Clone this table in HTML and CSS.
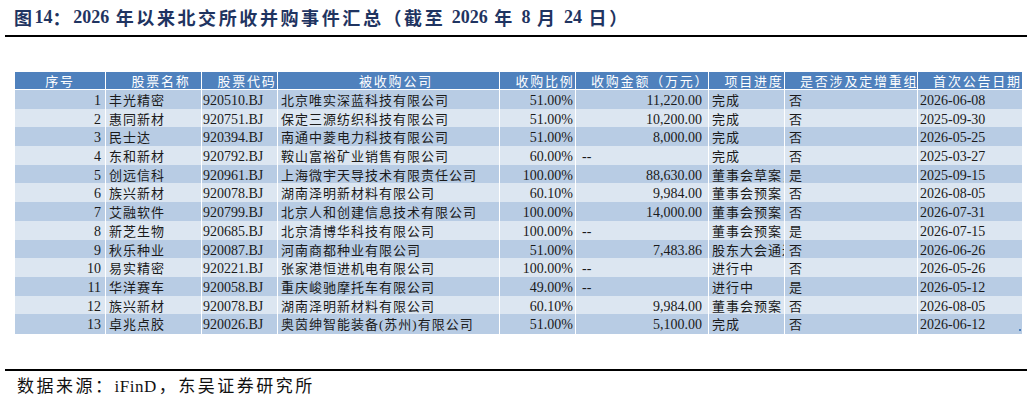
FILE: index.html
```html
<!DOCTYPE html>
<html lang="zh">
<head>
<meta charset="utf-8">
<title>图14</title>
<link rel="stylesheet" href="styles.css">
</head>
<body>
<div class="page">
  <div class="title">图<span class="lt">14</span>：<span class="lt">2026 </span>年以来北交所收并购事件汇总（截至<span class="lt"> 2026 </span>年<span class="lt"> 8 </span>月<span class="lt"> 24 </span>日）</div>
  <div class="rule"></div>

  <div class="table">
    <div class="tr head">
      <div class="th first">序号</div>
      <div class="th">股票名称</div>
      <div class="th">股票代码</div>
      <div class="th">被收购公司</div>
      <div class="th">收购比例</div>
      <div class="th">收购金额（万元）</div>
      <div class="th">项目进度</div>
      <div class="th">是否涉及定增重组</div>
      <div class="th">首次公告日期</div>
    </div>

    <div class="tr odd"><div class="td idx">1</div><div class="td cn name">丰光精密</div><div class="td code">920510.BJ</div><div class="td cn co">北京唯实深蓝科技有限公司</div><div class="td pct">51.00%</div><div class="td amt">11,220.00</div><div class="td cn prog">完成</div><div class="td cn yn">否</div><div class="td date">2026-06-08</div></div>
    <div class="tr even"><div class="td idx">2</div><div class="td cn name">惠同新材</div><div class="td code">920751.BJ</div><div class="td cn co">保定三源纺织科技有限公司</div><div class="td pct">51.00%</div><div class="td amt">10,200.00</div><div class="td cn prog">完成</div><div class="td cn yn">否</div><div class="td date">2025-09-30</div></div>
    <div class="tr odd"><div class="td idx">3</div><div class="td cn name">民士达</div><div class="td code">920394.BJ</div><div class="td cn co">南通中菱电力科技有限公司</div><div class="td pct">51.00%</div><div class="td amt">8,000.00</div><div class="td cn prog">完成</div><div class="td cn yn">否</div><div class="td date">2026-05-25</div></div>
    <div class="tr even"><div class="td idx">4</div><div class="td cn name">东和新材</div><div class="td code">920792.BJ</div><div class="td cn co">鞍山富裕矿业销售有限公司</div><div class="td pct">60.00%</div><div class="td amt dash">--</div><div class="td cn prog">完成</div><div class="td cn yn">否</div><div class="td date">2025-03-27</div></div>
    <div class="tr odd"><div class="td idx">5</div><div class="td cn name">创远信科</div><div class="td code">920961.BJ</div><div class="td cn co">上海微宇天导技术有限责任公司</div><div class="td pct">100.00%</div><div class="td amt">88,630.00</div><div class="td cn prog">董事会草案，</div><div class="td cn yn">是</div><div class="td date">2025-09-15</div></div>
    <div class="tr even"><div class="td idx">6</div><div class="td cn name">族兴新材</div><div class="td code">920078.BJ</div><div class="td cn co">湖南泽明新材料有限公司</div><div class="td pct">60.10%</div><div class="td amt">9,984.00</div><div class="td cn prog">董事会预案</div><div class="td cn yn">否</div><div class="td date">2026-08-05</div></div>
    <div class="tr odd"><div class="td idx">7</div><div class="td cn name">艾融软件</div><div class="td code">920799.BJ</div><div class="td cn co">北京人和创建信息技术有限公司</div><div class="td pct">100.00%</div><div class="td amt">14,000.00</div><div class="td cn prog">董事会预案</div><div class="td cn yn">否</div><div class="td date">2026-07-31</div></div>
    <div class="tr even"><div class="td idx">8</div><div class="td cn name">新芝生物</div><div class="td code">920685.BJ</div><div class="td cn co">北京清博华科技有限公司</div><div class="td pct">100.00%</div><div class="td amt dash">--</div><div class="td cn prog">董事会预案</div><div class="td cn yn">是</div><div class="td date">2026-07-15</div></div>
    <div class="tr odd"><div class="td idx">9</div><div class="td cn name">秋乐种业</div><div class="td code">920087.BJ</div><div class="td cn co">河南商都种业有限公司</div><div class="td pct">51.00%</div><div class="td amt">7,483.86</div><div class="td cn prog">股东大会通过</div><div class="td cn yn">否</div><div class="td date">2026-06-26</div></div>
    <div class="tr even"><div class="td idx">10</div><div class="td cn name">易实精密</div><div class="td code">920221.BJ</div><div class="td cn co">张家港恒进机电有限公司</div><div class="td pct">100.00%</div><div class="td amt dash">--</div><div class="td cn prog">进行中</div><div class="td cn yn">否</div><div class="td date">2026-05-26</div></div>
    <div class="tr odd"><div class="td idx">11</div><div class="td cn name">华洋赛车</div><div class="td code">920058.BJ</div><div class="td cn co">重庆峻驰摩托车有限公司</div><div class="td pct">49.00%</div><div class="td amt dash">--</div><div class="td cn prog">进行中</div><div class="td cn yn">是</div><div class="td date">2026-05-12</div></div>
    <div class="tr even"><div class="td idx">12</div><div class="td cn name">族兴新材</div><div class="td code">920078.BJ</div><div class="td cn co">湖南泽明新材料有限公司</div><div class="td pct">60.10%</div><div class="td amt">9,984.00</div><div class="td cn prog">董事会预案</div><div class="td cn yn">否</div><div class="td date">2026-08-05</div></div>
    <div class="tr odd"><div class="td idx">13</div><div class="td cn name">卓兆点胶</div><div class="td code">920026.BJ</div><div class="td cn co">奥茵绅智能装备(苏州)有限公司</div><div class="td pct">51.00%</div><div class="td amt">5,100.00</div><div class="td cn prog">完成</div><div class="td cn yn">否</div><div class="td date">2026-06-12</div></div>

    <div class="handle"></div>
  </div>

  <div class="rule foot-rule"></div>
  <div class="source">数据来源：<span class="latin">iFinD</span>，东吴证券研究所</div>
</div>
</body>
</html>
```

FILE: styles.css
```css
* { box-sizing: border-box; }

html, body {
  margin: 0;
  padding: 0;
  background: #ffffff;
}

.page {
  width: 1032px;
  height: 403px;
  overflow: hidden;
  font-family: "Liberation Serif", "Noto Sans CJK SC", serif;
  color: #1a1a1a;
}

.title {
  height: 34px;
  padding-left: 14px;
  display: flex;
  align-items: center;
  font-size: 18px;
  font-weight: bold;
  letter-spacing: 2.6px;
  color: #1f3461;
  white-space: pre;
}

.title .lt {
  letter-spacing: 0;
  word-spacing: 2px;
}

.rule {
  height: 2px;
  margin: 0 5px;
  background: #000000;
}

.title + .rule { margin-top: 1px; }

.table {
  position: relative;
  margin: 35px 0 0 15px;
  width: 1007px;
  display: flex;
  flex-direction: column;
  gap: 1px;
}

.tr {
  display: grid;
  grid-template-columns: 90px 95px 75px 221px 75px 132px 75px 132px 104px;
  column-gap: 1px;
  height: 17.7px;
}

.tr.head { height: 17px; }

.th {
  background: #4f81bd;
  color: #ffffff;
  font-size: 13px;
  letter-spacing: 1.8px;
  text-align: center;
  padding-left: 15px;
  padding-top: 1px;
  line-height: 17px;
  white-space: nowrap;
  overflow: hidden;
}

.th.first { padding-left: 0; }

.odd .td { background: #b8cce4; }
.even .td { background: #dce6f1; }

.td {
  font-size: 14px;
  line-height: 17.7px;
  padding-top: 2px;
  white-space: nowrap;
  overflow-x: clip;
  overflow-y: visible;
}

.td.cn {
  font-size: 13px;
  letter-spacing: 1px;
}

.idx { text-align: right; padding-right: 4px; }
.name { padding-left: 3px; }
.code { padding-left: 1px; }
.co { padding-left: 3px; }
.pct { text-align: right; padding-right: 2px; }
.amt { text-align: right; padding-right: 6px; }
.amt.dash { text-align: left; padding-left: 6px; }
.prog { padding-left: 3px; }
.yn { padding-left: 4px; }
.date { padding-left: 2px; }

.handle {
  position: absolute;
  right: 1px;
  bottom: 1px;
  width: 2px;
  height: 2px;
  background: #4f81bd;
}

.foot-rule { margin-top: 37px; }

.source {
  height: 32px;
  line-height: 32px;
  padding-left: 17px;
  font-size: 17px;
  letter-spacing: 2.5px;
  color: #111111;
  white-space: nowrap;
}

.source .latin {
  letter-spacing: 0.5px;
  margin-right: 2px;
}
```
